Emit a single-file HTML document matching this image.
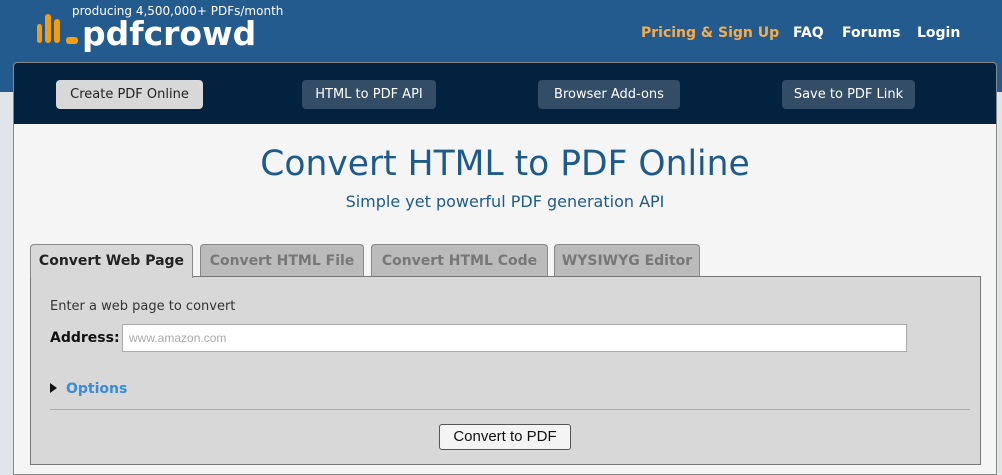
<!DOCTYPE html>
<html><head><style>
*{margin:0;padding:0;box-sizing:border-box}
body{width:1002px;height:475px;overflow:hidden;background:#dfe5eb;font-family:"DejaVu Sans","Liberation Sans",sans-serif;position:relative}
.hdr{position:absolute;left:0;top:0;width:1002px;height:92px;background:#235b8e}
.tag{position:absolute;left:72px;top:4px;color:#fff;font-size:12px}
.logo{position:absolute;left:82px;top:14px;color:#fff;font-size:33px;font-weight:bold}
.bar{position:absolute;background:#f59c0f;border-radius:3px}
.top{position:absolute;top:25px;font-size:14px;font-weight:bold;color:#fff}
.wrap{position:absolute;left:13px;top:62px;width:984px;height:413px;background:#f5f5f5;border:1px solid #888;border-radius:4px 4px 0 0}
.nav{position:absolute;left:0;top:0;width:982px;height:61px;background:#022240;border-radius:3px 3px 0 0}
.nb{position:absolute;top:17px;height:29px;background:#344d66;color:#fff;font-size:13px;line-height:29px;text-align:center;border-radius:4px}
h1{position:absolute;left:0;width:982px;top:81px;text-align:center;font-weight:normal;font-size:34.5px;color:#1e5a8a}
.sub{position:absolute;left:0;width:982px;top:129px;text-align:center;font-size:16px;color:#1e5a8a}
.tab{position:absolute;top:181px;height:33px;background:#bbb;border:1px solid #888;border-bottom:none;border-radius:4px 4px 0 0;color:#777;font-weight:bold;font-size:14px;line-height:32px;text-align:center}
.panel{position:absolute;left:16px;top:213px;width:951px;height:189px;background:#d8d8d8;border:1px solid #777}
</style></head><body>
<div class="hdr">
<div class="tag">producing 4,500,000+ PDFs/month</div>
<div class="bar" style="left:37px;top:24px;width:5px;height:19px"></div>
<div class="bar" style="left:45px;top:14px;width:6px;height:29px"></div>
<div class="bar" style="left:54px;top:19px;width:6px;height:24px"></div>
<div class="bar" style="left:66px;top:37px;width:12px;height:7px"></div>
<div class="logo">pdfcrowd</div>
<div class="top" style="left:641px;color:#f7ac4a">Pricing &amp; Sign Up</div>
<div class="top" style="left:793px">FAQ</div>
<div class="top" style="left:842px">Forums</div>
<div class="top" style="left:917px">Login</div>
</div>
<div class="wrap">
<div class="nav">
<div class="nb" style="left:42px;width:147px;background:#d8d8d8;color:#222">Create PDF Online</div>
<div class="nb" style="left:288px;width:134px">HTML to PDF API</div>
<div class="nb" style="left:524px;width:142px">Browser Add-ons</div>
<div class="nb" style="left:768px;width:133px">Save to PDF Link</div>
</div>
<h1>Convert HTML to PDF Online</h1>
<div class="sub">Simple yet powerful PDF generation API</div>
<div class="tab" style="left:16px;width:163px;background:#d8d8d8;color:#222;height:34px;z-index:2">Convert Web Page</div>
<div class="tab" style="left:186px;width:164px">Convert HTML File</div>
<div class="tab" style="left:357px;width:177px">Convert HTML Code</div>
<div class="tab" style="left:540px;width:146px">WYSIWYG Editor</div>
<div class="panel">
<div style="position:absolute;left:19px;top:22px;font-size:13px;color:#333">Enter a web page to convert</div>
<div style="position:absolute;left:19px;top:53px;font-size:14px;font-weight:bold;color:#111">Address:</div>
<div style="position:absolute;left:91px;top:47px;width:785px;height:28px;background:#fff;border:1px solid #aaa;font-family:'Liberation Sans',sans-serif;font-size:12px;color:#aaa;line-height:26px;padding-left:6px">www.amazon.com</div>
<div style="position:absolute;left:19px;top:106px;width:0;height:0;border-left:7px solid #111;border-top:5px solid transparent;border-bottom:5px solid transparent"></div>
<div style="position:absolute;left:35px;top:104px;font-size:14px;font-weight:bold;color:#3a8ad8">Options</div>
<div style="position:absolute;left:19px;top:132px;width:920px;height:1px;background:#aaa"></div>
<div style="position:absolute;left:408px;top:147px;width:132px;height:26px;background:#f4f4f4;border:1px solid #555;border-radius:3px;font-family:'Liberation Sans',sans-serif;font-size:15px;line-height:24px;text-align:center;color:#111">Convert to PDF</div>
</div>
</div>
</body></html>
